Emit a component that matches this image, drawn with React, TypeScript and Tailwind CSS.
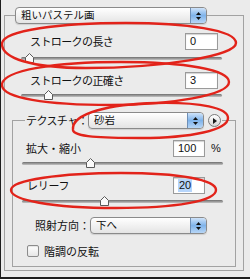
import React from "react";

const jp = { fontFamily: '"Noto Sans CJK JP", "Noto Sans", sans-serif' };
const num = { fontFamily: '"Liberation Sans", Arial, sans-serif' };

function Stepper() {
  return (
    <div className="flex h-full w-[16px] flex-col items-center justify-center gap-[2px] rounded-r-[3px] border-l border-[#6f8fb6] bg-gradient-to-b from-[#cfe3f9] via-[#7fb3ea] to-[#b7d6f6]">
      <svg width="5" height="3" viewBox="0 0 5 3">
        <polygon points="2.5,0 5,3 0,3" fill="#111" />
      </svg>
      <svg width="5" height="3" viewBox="0 0 5 3">
        <polygon points="0,0 5,0 2.5,3" fill="#111" />
      </svg>
    </div>
  );
}

function Dropdown({ label, w }: { label: string; w: string }) {
  return (
    <div
      className={`flex h-[17px] ${w} items-stretch overflow-hidden rounded-[4px] border border-[#8a8a8a] bg-gradient-to-b from-white to-[#e4e4e4] shadow-[0_1px_1px_rgba(0,0,0,0.12)]`}
    >
      <div className="flex flex-1 items-center pl-[5px] text-[10.5px] leading-none text-[#111]" style={jp}>
        {label}
      </div>
      <Stepper />
    </div>
  );
}

function Field({ value, selected, w }: { value: string; selected?: boolean; w: string }) {
  return (
    <div
      className={`flex h-[17px] ${w} items-center border border-[#9a9a9a] bg-white pl-[4px] shadow-[inset_0_1px_1px_rgba(0,0,0,0.18)]`}
    >
      <span
        className={`text-[11px] leading-[13px] text-[#111] ${selected ? "bg-[#b6d5fb] px-[1px]" : ""}`}
        style={num}
      >
        {value}
      </span>
    </div>
  );
}

function Thumb() {
  return (
    <svg width="9" height="10" viewBox="0 0 9 10">
      <polygon
        points="4.5,0.5 8.5,4.5 8.5,9.5 0.5,9.5 0.5,4.5"
        fill="#fbfbfb"
        stroke="#5a5a5a"
        strokeWidth="1"
      />
    </svg>
  );
}

function Slider({ thumb }: { thumb: string }) {
  return (
    <div className="relative h-[10px] w-full">
      <div className="absolute left-0 right-0 top-[4px] h-[3px] rounded-full bg-gradient-to-b from-[#6e6e6e] to-[#c4c4c4]" />
      <div className={`absolute top-0 ${thumb}`}>
        <Thumb />
      </div>
    </div>
  );
}

export default function App() {
  return (
    <div
      className="relative h-[279px] w-[250px] overflow-hidden border-b-2 border-l border-[#1e1e1e] bg-[#ebebeb]"
      style={jp}
    >
      <fieldset className="ml-[3px] mt-[7px] w-[240px] border border-[#a2a2a2] pb-[3px]">
        <legend className="ml-[10px]">
          <Dropdown label="粗いパステル画" w="w-[192px]" />
        </legend>

        {/* Stroke length */}
        <div className="mt-[9px] flex items-center justify-between pl-[25px] pr-[25px]">
          <span className="text-[11px] leading-none tracking-[-0.6px] text-[#111]">ストロークの長さ</span>
          <Field value="0" w="w-[33px]" />
        </div>
        <div className="mt-[3px] pl-[16px] pr-[21px]">
          <Slider thumb="left-[4px]" />
        </div>

        {/* Stroke accuracy */}
        <div className="mt-[9px] flex items-center justify-between pl-[25px] pr-[25px]">
          <span className="text-[11px] leading-none tracking-[-0.6px] text-[#111]">ストロークの正確さ</span>
          <Field value="3" w="w-[33px]" />
        </div>
        <div className="mt-[1px] pl-[16px] pr-[21px]">
          <Slider thumb="left-[23px]" />
        </div>

        {/* Texture group */}
        <fieldset className="mx-[7px] mt-[12px] border border-[#a2a2a2] pb-[9px]">
          <legend className="ml-[12px]">
            <div className="flex items-center pr-[1px]">
              <span className="w-[63px] whitespace-nowrap pl-[1px] text-[11px] leading-none tracking-[-0.6px] text-[#111]">
                テクスチャ：
              </span>
              <Dropdown label="砂岩" w="w-[116px]" />
              <div className="ml-[4px] flex h-[13px] w-[13px] items-center justify-center rounded-full border border-[#7a7a7a] bg-gradient-to-b from-white to-[#d6d6d6]">
                <svg width="4" height="6" viewBox="0 0 4 6" className="ml-[1px]">
                  <polygon points="0,0 4,3 0,6" fill="#1a1a1a" />
                </svg>
              </div>
            </div>
          </legend>

          {/* Scale */}
          <div className="mt-[11px] flex items-center pl-[13px] pr-[12px]">
            <span className="flex-1 text-[11px] leading-none text-[#111]">拡大・縮小</span>
            <Field value="100" w="w-[32px]" />
            <span className="ml-[6px] w-[12px] text-[11px] leading-none text-[#111]" style={num}>
              %
            </span>
          </div>
          <div className="mt-[1px] pl-[9px] pr-[12px]">
            <Slider thumb="left-[64px]" />
          </div>

          {/* Relief */}
          <div className="mt-[9px] flex items-center pl-[14px] pr-[30px]">
            <span className="flex-1 text-[11px] leading-none tracking-[-0.3px] text-[#111]">レリーフ</span>
            <Field value="20" selected w="w-[32px]" />
          </div>
          <div className="mt-[2px] pl-[9px] pr-[12px]">
            <Slider thumb="left-[78px]" />
          </div>

          {/* Light direction */}
          <div className="mt-[11px] flex items-center pl-[22px]">
            <span className="w-[55px] whitespace-nowrap text-[11px] leading-none text-[#111]">照射方向：</span>
            <Dropdown label="下へ" w="w-[117px]" />
          </div>

          {/* Invert */}
          <div className="mt-[11px] flex items-center pl-[14px]">
            <div className="h-[12px] w-[12px] rounded-[2px] border border-[#8c8c8c] bg-gradient-to-b from-white to-[#e6e6e6] shadow-[inset_0_1px_1px_rgba(0,0,0,0.1)]" />
            <span className="ml-[5px] text-[11px] leading-none text-[#111]">階調の反転</span>
          </div>
        </fieldset>
      </fieldset>

      {/* Red hand-drawn ellipses overlay */}
      <svg
        className="pointer-events-none absolute left-0 top-0"
        width="250"
        height="279"
        viewBox="0 0 250 279"
      >
        <g fill="none" stroke="#e2231a" strokeWidth="2.4" strokeLinecap="round">
          <path d="M1 44 C1 30 60 23 125 23 C185 23 235 30 235 43 C235 56 160 68 85 68 C30 68 1 58 1 44 Z" />
          <path d="M1 85 C1 70 55 62 120 62 C185 62 228 70 228 82 C228 95 170 105 110 105 C45 105 1 98 1 85 Z" />
          <path d="M72 130 C70 113 110 104 155 103 C200 102 227 108 227 118 C227 130 190 138 140 138 C100 138 73 137 72 130 Z" />
          <path d="M10 190 C10 180 60 173 120 173 C180 173 215 180 215 190 C215 201 175 208 115 208 C50 208 10 200 10 190 Z" />
        </g>
      </svg>
    </div>
  );
}
